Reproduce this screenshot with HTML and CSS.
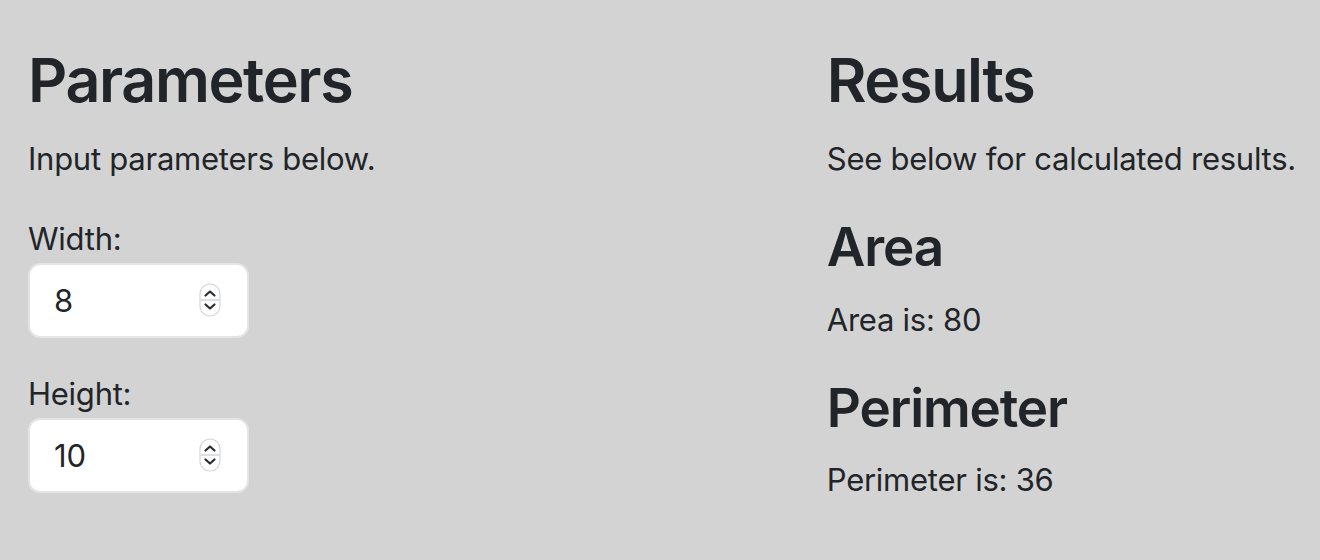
FILE: index.html
```html
<!DOCTYPE html>
<html lang="en">
<head>
<meta charset="utf-8">
<title>Rectangle calculator</title>
<link rel="stylesheet" href="styles.css">
</head>
<body>
<main class="page">
  <section class="col">
    <h1 class="title">Parameters</h1>
    <p class="text">Input parameters below.</p>
    <div class="field">
      <label class="label" for="w">Width:</label>
      <div class="num">
        <input class="num-input" id="w" type="text" value="8">
        <span class="spin">
          <svg width="22" height="34" viewBox="0 0 22 34">
            <rect x="1" y="1" width="20" height="32" rx="10" fill="#fff" stroke="#d4d6d8" stroke-width="1.2"/>
            <line x1="1.5" y1="17" x2="20.5" y2="17" stroke="#d4d6d8" stroke-width="1.5"/>
            <path d="M6.5 12.5 L11 8.5 L15.5 12.5" fill="none" stroke="#2a2d30" stroke-width="2.2" stroke-linecap="round" stroke-linejoin="round"/>
            <path d="M6.5 21.5 L11 25.5 L15.5 21.5" fill="none" stroke="#2a2d30" stroke-width="2.2" stroke-linecap="round" stroke-linejoin="round"/>
          </svg>
        </span>
      </div>
    </div>
    <div class="field">
      <label class="label" for="h">Height:</label>
      <div class="num">
        <input class="num-input" id="h" type="text" value="10">
        <span class="spin">
          <svg width="22" height="34" viewBox="0 0 22 34">
            <rect x="1" y="1" width="20" height="32" rx="10" fill="#fff" stroke="#d4d6d8" stroke-width="1.2"/>
            <line x1="1.5" y1="17" x2="20.5" y2="17" stroke="#d4d6d8" stroke-width="1.5"/>
            <path d="M6.5 12.5 L11 8.5 L15.5 12.5" fill="none" stroke="#2a2d30" stroke-width="2.2" stroke-linecap="round" stroke-linejoin="round"/>
            <path d="M6.5 21.5 L11 25.5 L15.5 21.5" fill="none" stroke="#2a2d30" stroke-width="2.2" stroke-linecap="round" stroke-linejoin="round"/>
          </svg>
        </span>
      </div>
    </div>
  </section>
  <section class="col">
    <h1 class="title">Results</h1>
    <p class="text">See below for calculated results.</p>
    <h2 class="subtitle">Area</h2>
    <p class="text">Area is: 80</p>
    <h2 class="subtitle">Perimeter</h2>
    <p class="text">Perimeter is: 36</p>
  </section>
</main>
</body>
</html>
```
FILE: styles.css
```css
html, body {
  margin: 0;
  padding: 0;
  background: #d3d3d3;
}
body {
  font-family: Inter, "Noto Sans", sans-serif;
  color: #212529;
  font-size: 31px;
  line-height: 48px;
  letter-spacing: -0.25px;
}
.page {
  display: flex;
  justify-content: space-between;
  padding: 42px 24px 0 28px;
}
.col {
  display: flex;
  flex-direction: column;
  align-items: flex-start;
}
.title {
  margin: 0 0 16px 0;
  font-size: 61px;
  line-height: 76.8px;
  font-weight: 600;
  letter-spacing: -1.4px;
}
.subtitle {
  margin: 0 0 16px 0;
  font-size: 53px;
  line-height: 64.8px;
  font-weight: 600;
  letter-spacing: -1.1px;
}
.text {
  margin: 0 0 32px 0;
}
.field {
  display: flex;
  flex-direction: column;
  align-items: flex-start;
  margin-bottom: 32px;
}
.label {
  display: block;
}
.num {
  display: flex;
  align-items: center;
  box-sizing: border-box;
  width: 221px;
  height: 75px;
  background: #fff;
  border: 2px solid #e2e4e7;
  border-radius: 12px;
  padding: 0 26px 0 24px;
}
.num-input {
  flex: 1;
  min-width: 0;
  border: 0;
  outline: none;
  background: transparent;
  font-family: inherit;
  font-size: 31px;
  color: #212529;
  padding: 0;
}
.spin {
  display: flex;
}
```
